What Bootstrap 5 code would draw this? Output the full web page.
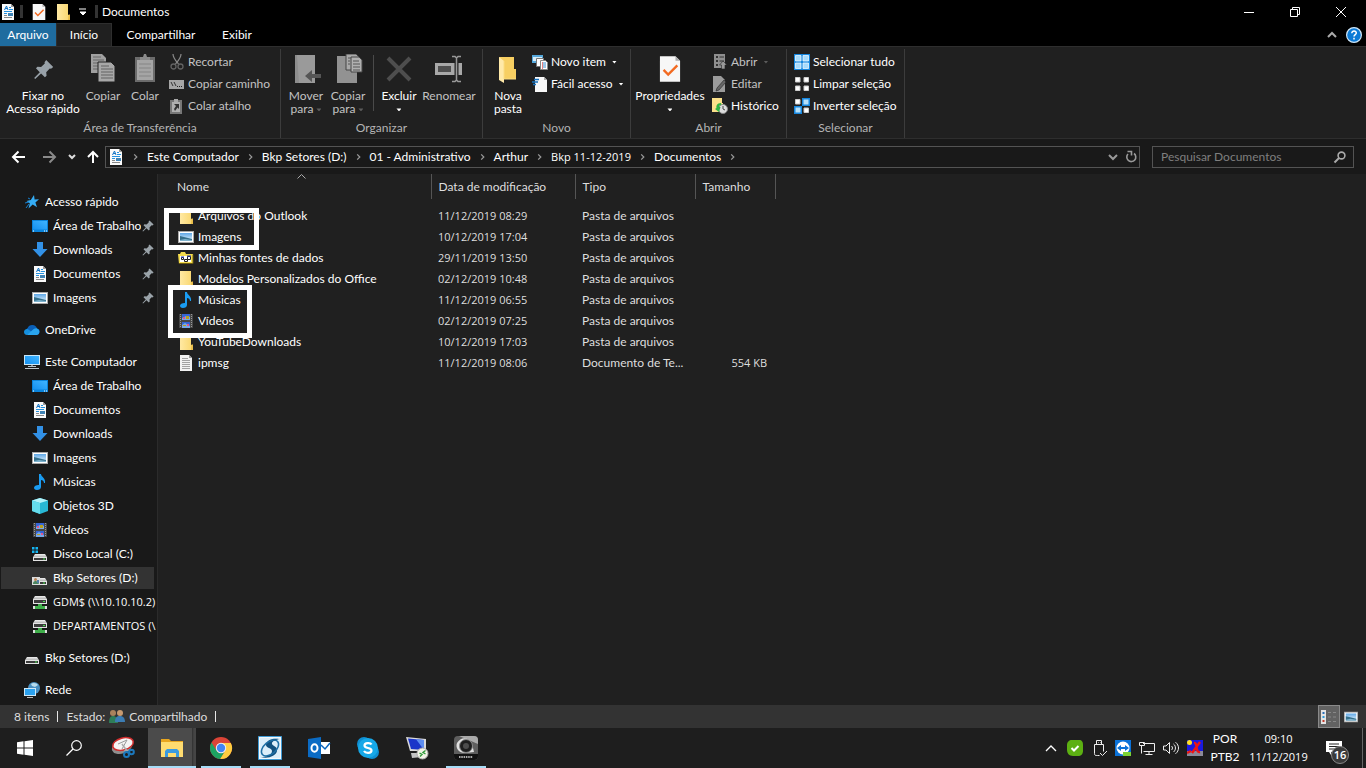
<!DOCTYPE html>
<html lang="pt-BR">
<head>
<meta charset="utf-8">
<meta name="viewport" content="width=device-width, initial-scale=1">
<title>Documentos</title>
<link href="https://cdn.jsdelivr.net/npm/bootstrap@5.3.0/dist/css/bootstrap.min.css" rel="stylesheet">
<style>
  body { font-family: Lato, "Open Sans", sans-serif; font-size: 12px; line-height: 16px; background: #202020; color: #fff; }
  button, input { font: inherit; color: inherit; }
  svg { flex: none; display: block; }
  .defs { position: absolute; width: 0; height: 0; }
  .i16 { width: 16px; height: 16px; }
  .i24 { width: 24px; height: 24px; }
  .i32 { width: 32px; height: 32px; }
  .plain { background: none; border: 0; padding: 0; border-radius: 0; color: inherit; text-decoration: none; font-size: 12px; line-height: 16px; white-space: nowrap; }
  .plain:hover { color: #fff; }
  .figures { font-family: "Open Sans", sans-serif; font-size: 11px; }

  .title-bar { background: #000; height: 23px; padding: 0 2px 0 0; }
  .v-tick { width: 3px; height: 13px; background: #333; }
  .title-name { margin-left: 4px; }
  .win-btn { width: 46px; height: 23px; }
  .tab-bar { background: #000; height: 23px; }
  .tab-link { height: 23px; display: flex; align-items: center; justify-content: center; }
  .tab-file { width: 56px; background: #1f6c9f; }
  .tab-home { width: 56px; background: #202020; border: 1px solid #2e2e2e; border-bottom: 0; }
  .tab-share { width: 98px; }
  .tab-view { width: 54px; }

  .ribbon { background: #202020; border-top: 1px solid #2e2e2e; border-bottom: 1px solid #2e2e2e; height: 93px; }
  .r-group { border-right: 1px solid #3c3c3c; margin-top: 2px; padding-top: 2px; height: 89px; }
  .g-clip { width: 281px; } .g-org { width: 202px; } .g-new { width: 148px; } .g-open { width: 156px; } .g-sel { width: 118px; }
  .r-label { color: #b4b4b4; text-align: center; height: 18px; line-height: 16px; }
  .big.plain { display: flex; flex-direction: column; align-items: center; gap: 4px; text-align: center; line-height: 13px; padding-top: 2px; }
  .w42 { width: 42px; } .w58 { width: 58px; } .w78 { width: 78px; }
  .small-btn { display: flex; align-items: center; gap: 3px; height: 22px; padding: 0 3px !important; }
  .off, .off:hover { color: #c3c3c3; }
  .caret { display: inline-block; width: 5px; height: 3px; background: currentColor; clip-path: polygon(0 0, 100% 0, 50% 100%); vertical-align: middle; margin-left: 3px; }
  .caret-off { color: #5c5c5c; }
  .r-rule { width: 1px; height: 56px; background: #4a4a4a; margin: 4px 4px 0; }

  .nav-row { background: #191919; height: 35px; padding: 0 12px 0 11px; }
  .address { border: 1px solid #535353; height: 22px; padding: 0 0 0 2px; }
  .chev { width: 7px; height: 8px; color: #9a9a9a; }
  .search-box { width: 202px; height: 22px; border: 1px solid #535353; padding: 0 5px 0 8px; }
  .search-box input { background: none; border: 0; outline: 0; padding: 0; min-width: 0; }
  .search-box input::placeholder { color: #7f7f7f; opacity: 1; }

  .side { width: 158px; background: #191919; border-right: 1px solid #2b2b2b; padding: 16px 1px 0; overflow: hidden; }
  .side-item { display: flex; align-items: center; height: 24px; gap: 5px; padding-left: 23px !important; overflow: hidden; }
  .side-item.kid { padding-left: 31px !important; }
  .side-item .side-name { overflow: hidden; flex: 1 1 0; min-width: 0; }
  .side-item.chosen { background: #333; height: 22px; margin: 1px 2px 1px 0; }
  .side-pin { width: 12px; height: 12px; margin: 0 2px 0 -4px; color: #9aa3a9; }

  .files { width: 617px; table-layout: fixed; border-collapse: collapse; color: #dedede; }
  .files th { font-weight: 400; height: 25px; padding: 0 0 0 7px; border-right: 1px solid #555; }
  .files th:first-child { padding-left: 19px; position: relative; }
  .files td { height: 21px; padding: 0 0 0 7px; white-space: nowrap; overflow: hidden; text-overflow: ellipsis; }
  .files td:first-child { padding-left: 20px; color: #fff; }
  .files tbody::before { content: ""; display: block; height: 6px; }
  .files .f-name { display: flex; align-items: center; gap: 4px; height: 21px; }
  .sort-mark { position: absolute; top: 0; left: 139px; width: 9px; height: 5px; }
  .marker { position: absolute; border: 5px solid #fff; pointer-events: none; }
  .marker-a { left: 6px; top: 34px; width: 95px; height: 42px; }
  .marker-b { left: 10px; top: 111px; width: 84px; height: 53px; }

  .status { background: #333; height: 23px; padding-left: 14px; color: #dedede; }
  .s-rule { width: 1px; height: 11px; background: #e6e6e6; }
  .view-btn { width: 22px; height: 23px; display: flex; align-items: center; justify-content: center; }
  .view-on { background: #626262; border: 1px solid #8a8a8a !important; }

  .taskbar { background: #1e1e1e; height: 40px; padding: 0 2px 0 1px; }
  .task-list { gap: 1px; }
  .task { width: 48px; height: 40px; display: flex; align-items: center; justify-content: center; position: relative; }
  .running::after { content: ""; position: absolute; left: 4px; right: 4px; bottom: 0; height: 2px; background: #a6dcf7; }
  .current { background: linear-gradient(90deg, #4b4b4b 44px, #303030 44px, #454545 46px); }
  .current::after { left: 0; right: 0; }
  .tray { width: 24px; height: 40px; display: flex; align-items: center; justify-content: center; }
  .tray-text { line-height: 18px; text-align: center; white-space: nowrap; }
  .lang { width: 36px; } .clock { width: 71px; }
  .notif { width: 48px; height: 40px; display: flex; align-items: center; justify-content: center; position: relative; }
  .notif-n { position: absolute; left: 17px; top: 18px; width: 18px; height: 18px; border-radius: 50%; background: #3a3a3a; border: 1px solid #888; line-height: 16px; font-weight: 600; text-align: center; }
  .desk { border-left: 1px solid #666; height: 40px; width: 2px; }
</style>
</head>
<body>
<svg class="defs" aria-hidden="true">
  <defs>
    <linearGradient id="gFold" x1="0" x2="1"><stop offset="0" stop-color="#ffe9a3"/><stop offset="1" stop-color="#f9d66c"/></linearGradient>
    <linearGradient id="gScr" x1="0" x2="1" y1="1" y2="0"><stop offset="0" stop-color="#1590f0"/><stop offset="1" stop-color="#3fb4ff"/></linearGradient>
    <linearGradient id="gSky" x1="0" x2="0" y1="0" y2="1"><stop offset="0" stop-color="#5fa8e8"/><stop offset="1" stop-color="#eaf6fb"/></linearGradient>
    <linearGradient id="gDrv" x1="0" x2="0" y1="0" y2="1"><stop offset="0" stop-color="#f0f0f0"/><stop offset="1" stop-color="#b5b5b5"/></linearGradient>
  </defs>
  <symbol id="doc" viewBox="0 0 16 16"><path d="M2 0h9l3 3v13H2z" fill="#fafafa"/><path d="M11 0v3h3z" fill="#9a9a9a"/><path d="M4.500 6 6.500 2l1.500 4M5.200 4.500h2.300" stroke="#1273c4" fill="none"/><path d="M9 3.500h2M9 5.500h4M4 7.500h8M4 9.500h3" stroke="#2491e0"/><path d="M8 9h5v3H8z" fill="#3f83b5"/><path d="M4 11.500h3M4 13.500h8" stroke="#888"/></symbol>
  <symbol id="check" viewBox="0 0 24 28"><path d="M1 0h17l5 5v23H1z" fill="#f7f7f7"/><path d="M18 0v5h5z" fill="#aaa"/><path d="m5 15 5 5 10-10" fill="none" stroke="#f26a21" stroke-width="2.600"/></symbol>
  <symbol id="folder" viewBox="0 0 16 16"><path d="M2 0h11v11h2v5H2z" fill="url(#gFold)"/><path d="M13.500 10.500h1.500V16h-2z" fill="#e9bd4a"/></symbol>
  <symbol id="bigfolder" viewBox="0 0 20 28"><path d="M1 1h15v12h2v10H6z" fill="#f7cf62"/><path d="m1 1 5 4v22l-5-3z" fill="#ffe9a8"/><path d="M6 5v18h12" fill="none" stroke="#fbdc80"/></symbol>
  <symbol id="pin" viewBox="0 0 16 16"><path d="M10 .500 15.500 6l-1.700 1.300-1-.200L10 10l.300 2.800L9 14l-3-3-4.600 4.400-.800-.800L5 10 2 7l1.200-1.300L6 6l2.900-2.800-.200-1z" fill="currentColor"/></symbol>
  <symbol id="chev" viewBox="0 0 8 8"><path d="m2.500 1 3 3-3 3" fill="none" stroke="currentColor" stroke-width="1.400"/></symbol>
  <symbol id="desktop" viewBox="0 0 16 16"><path d="M0 2h16v12H0z" fill="#0a84dc"/><path d="M1 3h14v8.500H1z" fill="url(#gScr)"/><path d="M1 13h1M12 13h1M14 13h1" stroke="#fff"/></symbol>
  <symbol id="down" viewBox="0 0 16 16"><path d="M5 0h6v7h4.500L8 15 .500 7H5z" fill="#3291e6"/></symbol>
  <symbol id="image" viewBox="0 0 16 16"><path d="M0 2h16v12H0z" fill="#a9a9a9"/><path d="M1 3h14v10H1z" fill="#fff"/><path d="M2 4h12v8H2z" fill="url(#gSky)"/><path d="m2 7 4 1 8 2v2H2z" fill="#35708c"/><path d="m2 11 5-1 7 1v1H2z" fill="#7fb4cf"/></symbol>
  <symbol id="star" viewBox="0 0 16 16"><path d="m10 1 .600 4.500 4.400-.300-3.600 3.200 1.600 4.800-4.300-2.600-4.200 3.900 1.300-5.300-3.300-2.200 4.300-.900z" fill="#35adf5"/><path d="m4 4 2 1M1 9l4-1M2 14l3-4" stroke="#1580d0"/></symbol>
  <symbol id="cloud" viewBox="0 0 16 16"><path d="M4 13a4 4 0 0 1-.400-7A5 5 0 0 1 13 6.500 3.300 3.300 0 0 1 12.800 13z" fill="#0a60b8"/><path d="M3 13c-1.500 0-3-1-3-3s2-3.200 4-2.800L8 10z" fill="#1590df"/><path d="M3 13 8 8.500c2-1.500 3-2.500 5-2A3.400 3.400 0 0 1 13 13z" fill="#2aa5ef"/></symbol>
  <symbol id="pc" viewBox="0 0 16 16"><path d="M0 1h16v10H0z" fill="#c9e6f7"/><path d="M1 2h14v8H1z" fill="url(#gScr)"/><path d="M7 11h2v2H7z" fill="#888"/><path d="M4 12.500h8M1 14.500h14" stroke="#b8c4cc"/></symbol>
  <symbol id="music" viewBox="0 0 16 16"><path d="M7 0h2c0 3 5 4 4 9h-1c0-2-1.500-3-3-3v7c0 2-1.800 3-4 3s-3-1-3-2.200C2 12 4.500 10.800 7 11z" fill="#1a9cf2"/></symbol>
  <symbol id="cube" viewBox="0 0 16 16"><path d="m8 0 8 2.500v10.500L8 16l-8-3V2.500z" fill="#28b7d4"/><path d="m8 0 8 2.500L8 5 0 2.500z" fill="#b4f2fa"/><path d="M0 2.500 8 5v11l-8-3z" fill="#65dcec"/></symbol>
  <symbol id="video" viewBox="0 0 16 16"><path d="M1 1h14v14H1z" fill="#474747"/><path d="M2.500 1v14M13.500 1v14" stroke="#999" stroke-dasharray="1 1"/><path d="M4 1h8v6H4zM4 9h8v6H4z" fill="#3565d6"/><path d="m4 5 4-2 4 1v3H4zM4 12l3-2 5 3v2H4z" fill="#77a7e8"/><path d="M5 4h2v2H5zM9 11h2v2H9z" fill="#e4568a"/><path d="M8 3h3v3H8zM5 12h3v1H5z" fill="#b7a01e"/></symbol>
  <symbol id="drive" viewBox="0 0 16 16"><path d="M3 7h10l2 3H1z" fill="url(#gDrv)"/><path d="M1 10h14v4H1z" fill="#e3e3e3"/><path d="M2 11h12v2H2z" fill="#3c3c3c"/><path d="M11 12h2" stroke="#49e24e"/></symbol>
  <symbol id="drivec" viewBox="0 0 16 16"><path d="M3 8h10l2 3H1z" fill="url(#gDrv)"/><path d="M1 11h14v4H1z" fill="#e3e3e3"/><path d="M2 12h12v2H2z" fill="#3c3c3c"/><path d="M11 13h2" stroke="#49e24e"/><path d="M0 1h2.500v2.500H0zM3.500 1H6v2.500H3.500zM0 4.500h2.500V7H0zM3.500 4.500H6V7H3.500z" fill="#15b5f2"/></symbol>
  <symbol id="drived" viewBox="0 0 16 16"><path d="M3 8h10l2 3H1z" fill="url(#gDrv)"/><path d="M1 11h14v4H1z" fill="#e3e3e3"/><path d="M2 12h12v2H2z" fill="#3c3c3c"/><path d="M11 13h2" stroke="#49e24e"/><path d="M0 7h8v8H0z" fill="#dcdcdc"/><path d="M1 14c0-3 2-3 2.500-3S6 11 7 14z" fill="#4c8660"/><circle cx="3.500" cy="9.500" r="1.500" fill="#b98357"/><path d="M5 10h2v3H5z" fill="#547ea8"/></symbol>
  <symbol id="netdrive" viewBox="0 0 16 16"><path d="M3 2h10l2 3H1z" fill="url(#gDrv)"/><path d="M1 5h14v5H1z" fill="#e3e3e3"/><path d="M2 6h12v3H2z" fill="#3c3c3c"/><path d="M11 7.500h2" stroke="#49e24e"/><path d="M6 10h4v2h5v3H1v-3h5z" fill="#3fae4a"/><path d="M1 12h2v3H1zM13 12h2v3h-2z" fill="#ddd"/></symbol>
  <symbol id="network" viewBox="0 0 16 16"><circle cx="10" cy="6" r="6" fill="#4a90c2"/><path d="M7 2c2-2 6-1 7 1l-3 2-3-1z" fill="#b9dcee"/><path d="M0 6h12v8H0z" fill="#cfe8f7"/><path d="M1 7h10v6H1z" fill="#2ba1ee"/><path d="M3 15.500h6" stroke="#bbb"/></symbol>
  <symbol id="dsn" viewBox="0 0 16 16"><path d="M0 4h2l1-2h4l1 2h7v10H1z" fill="#f5dd4e"/><path d="M1 13.500h14v-9" fill="none" stroke="#6d5c10"/><path d="M2 6h11v6H2z" fill="#fff"/><path d="M3.500 7.500h2v2h-2zM9.500 6.500h3v3h-3zM6.500 9.500h3v2h-3z" fill="#fff" stroke="#222"/><path d="M3 7h3M9 6h4" stroke="#2034c0"/></symbol>
  <symbol id="txt" viewBox="0 0 16 16"><path d="M2 0h9l3 3v13H2z" fill="#f2f2f2"/><path d="M11 0v3h3z" fill="#999"/><path d="M4 3.500h6M4 5.500h8M4 7.500h8M4 9.500h8M4 11.500h8M4 13.500h8" stroke="#a2a2a2"/></symbol>
  <symbol id="copy" viewBox="0 0 26 28"><path d="M1 0h11l4 4v15H1z" fill="#a0a0a0"/><path d="M3 3h8M3 6h11M3 9h11M3 12h11M3 15h11" stroke="#666"/><path d="M8 8h13l4 4v16H8z" fill="#a8a8a8" stroke="#222"/><path d="M11 12h8M11 15h12M11 18h12M11 21h12M11 24h12" stroke="#626262"/></symbol>
  <symbol id="paste" viewBox="0 0 20 28"><path d="M0 3h20v25H0z" fill="#6c6c6c"/><path d="M2 6h16v20H2z" fill="#a5a5a5"/><path d="M5 6V3h3l1-3h2l1 3h3v3z" fill="#8a8a8a"/><path d="M4 10h12M4 14h12M4 18h12M4 22h12" stroke="#858585"/></symbol>
  <symbol id="cut" viewBox="0 0 16 16"><path d="M4 0c0 4 3 7 5.500 10M12 0c0 4-3 7-5.500 10" fill="none" stroke="#8a8a8a" stroke-width="1.200"/><circle cx="4.500" cy="12.500" r="2.500" fill="none" stroke="#626262" stroke-width="1.300"/><circle cx="11.500" cy="12.500" r="2.500" fill="none" stroke="#626262" stroke-width="1.300"/></symbol>
  <symbol id="path" viewBox="0 0 16 16"><path d="M0 4h15v9H0z" fill="#a6a6a6"/><path d="m2 6 2 4M5 6l2 4" stroke="#333"/><path d="M8 10.500h1M10 10.500h1M12 10.500h1" stroke="#222"/></symbol>
  <symbol id="pastelink" viewBox="0 0 16 16"><path d="M1 2h12v14H1z" fill="#777"/><path d="M3 4h8v10H3z" fill="#b0b0b0"/><path d="M5 1h4v3H5z" fill="#aaa"/><path d="M5 6h5v5L8.500 9.500 6 13l-1-2 2-3z" fill="#333"/></symbol>
  <symbol id="move" viewBox="0 0 28 30"><path d="M1 1h20v28H1z" fill="#8d8d8d"/><path d="M3 1h18v28H5z" fill="#9a9a9a"/><path d="m11 22 7-6v4h9v4h-9v4z" fill="#555"/></symbol>
  <symbol id="copyto" viewBox="0 0 28 30"><path d="M1 2h20v27H1z" fill="#929292"/><path d="M10 0h10l3 3v13H10z" fill="#a9a9a9" stroke="#444"/><path d="M15 3h8l3 3v12H15z" fill="#b0b0b0" stroke="#444"/><path d="M17 7h6M17 10h7M17 13h7M17 16h7M12 4h3M12 7h2M12 10h2" stroke="#555"/></symbol>
  <symbol id="del" viewBox="0 0 28 28"><path d="m3 3 22 22M25 3 3 25" stroke="#4e4e4e" stroke-width="4"/></symbol>
  <symbol id="rename" viewBox="0 0 30 28"><path d="M1 8h27v12H1z" fill="#a8a8a8"/><path d="M4 11h13v6H4z" fill="#4f4f4f"/><path d="M22.500 2v24" stroke="#222" stroke-width="4"/><path d="M18 1.500h3l1.500 1.500L24 1.500h3M22.500 3v22M18 26.500h3l1.500-1.500 1.500 1.500h3" fill="none" stroke="#999" stroke-width="1.500"/></symbol>
  <symbol id="newitem" viewBox="0 0 16 16"><path d="M0 1h11v8H0z" fill="#55a8dc"/><path d="M1 3h9v4H1z" fill="#d8edf7"/><path d="M4.500 4.500h7v8h-7z" fill="#fff" stroke="#777"/><path d="M8.500 6.500h5l2 2v7h-7z" fill="#fff" stroke="#888"/><path d="M10 9h4M10 11h4M10 13h4" stroke="#3b8fd2"/><path d="M10.500 8v7" stroke="#e58383"/></symbol>
  <symbol id="easy" viewBox="0 0 16 16"><path d="M3 1h9l3 3v12H3z" fill="#f8f8f8"/><path d="M12 1v3h3z" fill="#aaa"/><path d="M2 3.500h5M0 6h6M1 8.500h3" stroke="#1570bd" stroke-width="1.300"/></symbol>
  <symbol id="open" viewBox="0 0 16 16"><path d="M2 0h11v14H2z" fill="#8f8f8f"/><path d="M4 2h2v2H4zM4 6h2v2H4zM4 10h2v2H4z" fill="#333"/><path d="M7.500 3H12M7.500 7H12" stroke="#333"/><path d="m11 7 4 4h-2v4H9.500v-4H7.500z" fill="#999" stroke="#222" stroke-width=".600"/></symbol>
  <symbol id="edit" viewBox="0 0 16 16"><path d="M1 0h8l4 4v12H1z" fill="#9b9b9b"/><path d="m5 12 7-8 2 2-7 8-3 1z" fill="#666" stroke="#222" stroke-width=".600"/></symbol>
  <symbol id="hist" viewBox="0 0 16 16"><path d="M0 0h10v5h1v9H0z" fill="#fbe08a"/><circle cx="11" cy="11" r="4.500" fill="#ddd" stroke="#888"/><path d="M11 8v3l2 1" fill="none" stroke="#444"/><path d="M9 5c-4 0-5 3-4.500 5L3 11l4 3 1.500-5H7c0-1.500 1-2 2.500-2.500z" fill="#2fb344"/></symbol>
  <symbol id="selall" viewBox="0 0 16 16"><path d="M0 0h16v16H0z" fill="#1687df"/><path d="M1.500 1.500h5.500v5.500H1.500zM9 1.500h5.500v5.500H9zM1.500 9h5.500v5.500H1.500zM9 9h5.500v5.500H9z" fill="#a8dbfb" stroke="#e8f6ff" stroke-width=".800"/></symbol>
  <symbol id="selnone" viewBox="0 0 16 16"><path d="M1.500 1.500H6V6H1.500zM10 1.500h4.500V6H10zM1.500 10H6v4.500H1.500zM10 10h4.500v4.500H10z" fill="#fff" stroke="#ccc"/></symbol>
  <symbol id="selinv" viewBox="0 0 16 16"><path d="M1.500 1.500H6V6H1.500zM10 10h4.500v4.500H10z" fill="#fff" stroke="#ccc"/><path d="M8 0h8v8H8zM0 8h8v8H0z" fill="#1687df"/><path d="M9.500 1.500h5v5h-5zM1.500 9.500h5v5h-5z" fill="#b5e0fb"/></symbol>
  <symbol id="lens" viewBox="0 0 16 16"><circle cx="9.500" cy="6.500" r="3.400" fill="none" stroke="currentColor" stroke-width="1.600"/><path d="M7 9l-4.500 4.500" stroke="currentColor" stroke-width="2"/></symbol>
  <symbol id="people" viewBox="0 0 16 16"><circle cx="4" cy="4" r="3" fill="#a9825c"/><path d="M0 14c0-6 2-7 4-7s5 1 5 7z" fill="#2e7d58"/><circle cx="11" cy="4" r="3" fill="#c79a70"/><path d="M6 13c0-5 2-6 5-6s5 2 5 6z" fill="#3c7db4"/></symbol>
</svg>

<div class="vh-100 d-flex flex-column overflow-hidden">
  <header>
    <div class="title-bar d-flex align-items-center">
      <svg class="i16"><use href="#doc"/></svg>
      <span class="v-tick ms-1"></span>
      <button class="btn plain ms-2" aria-label="Propriedades"><svg class="i16"><use href="#check"/></svg></button>
      <button class="btn plain ms-2" aria-label="Nova pasta"><svg class="i16"><use href="#folder"/></svg></button>
      <button class="btn plain ms-2" aria-label="Personalizar"><svg width="8" height="8"><path d="M0 1h7M1 4h6L4 7z" stroke="#fff" fill="#fff"/></svg></button>
      <span class="v-tick ms-2"></span>
      <span class="title-name">Documentos</span>
      <div class="ms-auto d-flex">
        <button class="btn plain win-btn" aria-label="Minimizar"><svg class="m-auto" width="10" height="10"><path d="M0 5.500h10" stroke="#fff"/></svg></button>
        <button class="btn plain win-btn" aria-label="Restaurar"><svg class="m-auto" width="10" height="10"><path d="M.500 2.500h7v7h-7zM2.500 2.500v-2h7v7h-2" stroke="#fff" fill="none"/></svg></button>
        <button class="btn plain win-btn" aria-label="Fechar"><svg class="m-auto" width="10" height="10"><path d="m0 0 10 10M10 0 0 10" stroke="#fff"/></svg></button>
      </div>
    </div>
    <nav class="tab-bar d-flex align-items-center">
      <a href="#" class="plain tab-link tab-file">Arquivo</a>
      <a href="#" class="plain tab-link tab-home">Início</a>
      <a href="#" class="plain tab-link tab-share">Compartilhar</a>
      <a href="#" class="plain tab-link tab-view">Exibir</a>
      <button class="btn plain ms-auto me-2" aria-label="Minimizar faixa"><svg width="12" height="8"><path d="m2 6 4-4 4 4" stroke="#aaa" stroke-width="2" fill="none"/></svg></button>
      <button class="btn plain me-1" aria-label="Ajuda"><svg class="i16" viewBox="0 0 16 16"><circle cx="8" cy="8" r="7.400" fill="#0b7ad6" stroke="#cfe6f8" stroke-width="1.200"/><path d="M5.800 6.200c0-3 4.600-2.700 4.500-.200C10.300 7.600 8 7.600 8 9.500M8 10.800v1.600" fill="none" stroke="#fff" stroke-width="1.500"/></svg></button>
    </nav>
    <div class="ribbon d-flex">
      <section class="r-group g-clip d-flex flex-column justify-content-between">
        <div class="d-flex ps-1">
          <button class="btn plain big w78"><svg class="i32" viewBox="-5 -5 25 25" color="#98a1a8"><use href="#pin" width="16" height="16"/></svg><span>Fixar no<br>Acesso rápido</span></button>
          <button class="btn plain big w42 off"><svg class="i32" viewBox="-3 -1 32 32"><use href="#copy" width="26" height="28"/></svg>Copiar</button>
          <button class="btn plain big w42 off"><svg class="i32" viewBox="-6 -1 32 32"><use href="#paste" width="20" height="28"/></svg>Colar</button>
          <div>
            <button class="btn plain small-btn off"><svg class="i16"><use href="#cut"/></svg>Recortar</button>
            <button class="btn plain small-btn off"><svg class="i16"><use href="#path"/></svg>Copiar caminho</button>
            <button class="btn plain small-btn off"><svg class="i16"><use href="#pastelink"/></svg>Colar atalho</button>
          </div>
        </div>
        <div class="r-label">Área de Transferência</div>
      </section>
      <section class="r-group g-org d-flex flex-column justify-content-between">
        <div class="d-flex ps-1">
          <button class="btn plain big w42 off"><svg class="i32" viewBox="-4 -1 32 32"><use href="#move" width="28" height="30"/></svg><span>Mover<br>para<i class="caret caret-off"></i></span></button>
          <button class="btn plain big w42 off"><svg class="i32" viewBox="-4 -1 32 32"><use href="#copyto" width="28" height="30"/></svg><span>Copiar<br>para<i class="caret caret-off"></i></span></button>
          <span class="r-rule"></span>
          <button class="btn plain big w42"><svg class="i32" viewBox="-2 -2 32 32"><use href="#del" width="28" height="28"/></svg><span>Excluir<br><i class="caret ms-0"></i></span></button>
          <button class="btn plain big w58 off"><svg class="i32" viewBox="-1 -2 32 32"><use href="#rename" width="30" height="28"/></svg>Renomear</button>
        </div>
        <div class="r-label">Organizar</div>
      </section>
      <section class="r-group g-new d-flex flex-column justify-content-between">
        <div class="d-flex ps-1">
          <button class="btn plain big w42"><svg class="i32" viewBox="-6 -3 32 32"><use href="#bigfolder" width="20" height="28"/></svg><span>Nova<br>pasta</span></button>
          <div>
            <button class="btn plain small-btn"><svg class="i16"><use href="#newitem"/></svg>Novo item<i class="caret"></i></button>
            <button class="btn plain small-btn"><svg class="i16"><use href="#easy"/></svg>Fácil acesso<i class="caret"></i></button>
          </div>
        </div>
        <div class="r-label">Novo</div>
      </section>
      <section class="r-group g-open d-flex flex-column justify-content-between">
        <div class="d-flex">
          <button class="btn plain big w78"><svg class="i32" viewBox="-5 -2 32 32"><use href="#check" width="22" height="28"/></svg><span>Propriedades<br><i class="caret ms-0"></i></span></button>
          <div>
            <button class="btn plain small-btn off"><svg class="i16"><use href="#open"/></svg>Abrir<i class="caret caret-off"></i></button>
            <button class="btn plain small-btn off"><svg class="i16"><use href="#edit"/></svg>Editar</button>
            <button class="btn plain small-btn"><svg class="i16"><use href="#hist"/></svg>Histórico</button>
          </div>
        </div>
        <div class="r-label">Abrir</div>
      </section>
      <section class="r-group g-sel d-flex flex-column justify-content-between">
        <div class="ps-1">
          <button class="btn plain small-btn"><svg class="i16"><use href="#selall"/></svg>Selecionar tudo</button>
          <button class="btn plain small-btn"><svg class="i16"><use href="#selnone"/></svg>Limpar seleção</button>
          <button class="btn plain small-btn"><svg class="i16"><use href="#selinv"/></svg>Inverter seleção</button>
        </div>
        <div class="r-label">Selecionar</div>
      </section>
    </div>
    <div class="nav-row d-flex align-items-center gap-1">
      <div class="d-flex align-items-center gap-1">
        <button class="btn plain me-2" aria-label="Voltar"><svg width="18" height="16"><path d="M2 8h12M7.500 2.500 2 8l5.500 5.500" stroke="#fff" stroke-width="2" fill="none"/></svg></button>
        <button class="btn plain me-1" aria-label="Avançar"><svg width="18" height="16"><path d="M2 8h12M8.500 2.500 14 8l-5.500 5.500" stroke="#8a8a8a" stroke-width="2" fill="none"/></svg></button>
        <button class="btn plain me-1" aria-label="Recentes"><svg width="10" height="8"><path d="m2 2 3 3 3-3" stroke="#ddd" stroke-width="2" fill="none"/></svg></button>
        <button class="btn plain" aria-label="Acima"><svg width="16" height="16"><path d="M8 14V3M3 8l5-5 5 5" stroke="#fff" stroke-width="2" fill="none"/></svg></button>
      </div>
      <div class="address d-flex align-items-center flex-grow-1">
        <svg class="i16"><use href="#doc"/></svg>
        <nav class="d-flex align-items-center gap-2 ms-2" aria-label="Caminho">
          <svg class="chev"><use href="#chev"/></svg><a href="#" class="plain">Este Computador</a>
          <svg class="chev"><use href="#chev"/></svg><a href="#" class="plain">Bkp Setores (D:)</a>
          <svg class="chev"><use href="#chev"/></svg><a href="#" class="plain">01 - Administrativo</a>
          <svg class="chev"><use href="#chev"/></svg><a href="#" class="plain">Arthur</a>
          <svg class="chev"><use href="#chev"/></svg><a href="#" class="plain figures">Bkp 11-12-2019</a>
          <svg class="chev"><use href="#chev"/></svg><a href="#" class="plain">Documentos</a>
          <svg class="chev"><use href="#chev"/></svg>
        </nav>
        <button class="btn plain ms-auto me-1" aria-label="Locais anteriores"><svg width="12" height="10"><path d="m2 3 4 4 4-4" stroke="#999" stroke-width="2" fill="none"/></svg></button>
        <button class="btn plain" aria-label="Atualizar"><svg class="i16" viewBox="0 0 16 16"><path d="M11 4.500A4.500 4.500 0 1 1 5 5M4.500 2.500h4v4" stroke="#999" stroke-width="1.600" fill="none"/></svg></button>
      </div>
      <div class="search-box d-flex align-items-center ms-2">
        <input type="text" class="flex-grow-1" placeholder="Pesquisar Documentos" aria-label="Pesquisar Documentos">
        <svg class="i16" color="#aaa"><use href="#lens"/></svg>
      </div>
    </div>
  </header>

  <main class="d-flex flex-grow-1 overflow-hidden">
    <nav class="side flex-shrink-0" aria-label="Painel de navegação">
      <div class="mb-2">
        <a href="#" class="plain side-item"><svg class="i16"><use href="#star"/></svg><span class="side-name">Acesso rápido</span></a>
        <a href="#" class="plain side-item kid"><svg class="i16"><use href="#desktop"/></svg><span class="side-name">Área de Trabalho</span><svg class="side-pin"><use href="#pin"/></svg></a>
        <a href="#" class="plain side-item kid"><svg class="i16"><use href="#down"/></svg><span class="side-name">Downloads</span><svg class="side-pin"><use href="#pin"/></svg></a>
        <a href="#" class="plain side-item kid"><svg class="i16"><use href="#doc"/></svg><span class="side-name">Documentos</span><svg class="side-pin"><use href="#pin"/></svg></a>
        <a href="#" class="plain side-item kid"><svg class="i16"><use href="#image"/></svg><span class="side-name">Imagens</span><svg class="side-pin"><use href="#pin"/></svg></a>
      </div>
      <div class="mb-2">
        <a href="#" class="plain side-item"><svg class="i16"><use href="#cloud"/></svg><span class="side-name">OneDrive</span></a>
      </div>
      <div class="mb-2">
        <a href="#" class="plain side-item"><svg class="i16"><use href="#pc"/></svg><span class="side-name">Este Computador</span></a>
        <a href="#" class="plain side-item kid"><svg class="i16"><use href="#desktop"/></svg><span class="side-name">Área de Trabalho</span></a>
        <a href="#" class="plain side-item kid"><svg class="i16"><use href="#doc"/></svg><span class="side-name">Documentos</span></a>
        <a href="#" class="plain side-item kid"><svg class="i16"><use href="#down"/></svg><span class="side-name">Downloads</span></a>
        <a href="#" class="plain side-item kid"><svg class="i16"><use href="#image"/></svg><span class="side-name">Imagens</span></a>
        <a href="#" class="plain side-item kid"><svg class="i16"><use href="#music"/></svg><span class="side-name">Músicas</span></a>
        <a href="#" class="plain side-item kid"><svg class="i16"><use href="#cube"/></svg><span class="side-name">Objetos 3D</span></a>
        <a href="#" class="plain side-item kid"><svg class="i16"><use href="#video"/></svg><span class="side-name">Vídeos</span></a>
        <a href="#" class="plain side-item kid"><svg class="i16"><use href="#drivec"/></svg><span class="side-name">Disco Local (C:)</span></a>
        <a href="#" class="plain side-item kid chosen"><svg class="i16"><use href="#drived"/></svg><span class="side-name">Bkp Setores (D:)</span></a>
        <a href="#" class="plain side-item kid"><svg class="i16"><use href="#netdrive"/></svg><span class="side-name figures">GDM$ (\\10.10.10.2)</span></a>
        <a href="#" class="plain side-item kid"><svg class="i16"><use href="#netdrive"/></svg><span class="side-name figures">DEPARTAMENTOS (\</span></a>
      </div>
      <div class="mb-2">
        <a href="#" class="plain side-item"><svg class="i16"><use href="#drive"/></svg><span class="side-name">Bkp Setores (D:)</span></a>
      </div>
      <a href="#" class="plain side-item"><svg class="i16"><use href="#network"/></svg><span class="side-name">Rede</span></a>
    </nav>
    <div class="flex-grow-1 position-relative overflow-hidden">
      <table class="files">
        <colgroup><col style="width:273px"><col style="width:144px"><col style="width:120px"><col style="width:80px"></colgroup>
        <thead><tr><th>Nome<svg class="sort-mark"><path d="m.500 4.500 4-4 4 4" fill="none" stroke="#aaa"/></svg></th><th>Data de modificação</th><th>Tipo</th><th>Tamanho</th></tr></thead>
        <tbody>
          <tr><td><span class="f-name"><svg class="i16"><use href="#folder"/></svg>Arquivos do Outlook</span></td><td class="figures">11/12/2019 08:29</td><td>Pasta de arquivos</td><td></td></tr>
          <tr><td><span class="f-name"><svg class="i16"><use href="#image"/></svg>Imagens</span></td><td class="figures">10/12/2019 17:04</td><td>Pasta de arquivos</td><td></td></tr>
          <tr><td><span class="f-name"><svg class="i16"><use href="#dsn"/></svg>Minhas fontes de dados</span></td><td class="figures">29/11/2019 13:50</td><td>Pasta de arquivos</td><td></td></tr>
          <tr><td><span class="f-name"><svg class="i16"><use href="#folder"/></svg>Modelos Personalizados do Office</span></td><td class="figures">02/12/2019 10:48</td><td>Pasta de arquivos</td><td></td></tr>
          <tr><td><span class="f-name"><svg class="i16"><use href="#music"/></svg>Músicas</span></td><td class="figures">11/12/2019 06:55</td><td>Pasta de arquivos</td><td></td></tr>
          <tr><td><span class="f-name"><svg class="i16"><use href="#video"/></svg>Vídeos</span></td><td class="figures">02/12/2019 07:25</td><td>Pasta de arquivos</td><td></td></tr>
          <tr><td><span class="f-name"><svg class="i16"><use href="#folder"/></svg>YouTubeDownloads</span></td><td class="figures">10/12/2019 17:03</td><td>Pasta de arquivos</td><td></td></tr>
          <tr><td><span class="f-name"><svg class="i16"><use href="#txt"/></svg>ipmsg</span></td><td class="figures">11/12/2019 08:06</td><td>Documento de Te...</td><td class="text-end pe-2 figures">554 KB</td></tr>
        </tbody>
      </table>
      <span class="marker marker-a"></span>
      <span class="marker marker-b"></span>
    </div>
  </main>

  <div class="status d-flex align-items-center">
    <span>8 itens</span><span class="s-rule mx-2"></span>
    <span>Estado:</span><svg class="i16 mx-1"><use href="#people"/></svg><span>Compartilhado</span><span class="s-rule ms-2"></span>
    <div class="ms-auto d-flex me-1">
      <button class="btn plain view-btn view-on" aria-label="Detalhes"><svg width="16" height="14"><path d="M0 0h5v14H0z" fill="#e4e4e4"/><path d="M7 2.500h3M12 2.500h3M7 7h3M12 7h3M7 11.500h3M12 11.500h3" stroke="#888"/><path d="M1.500 2h2v2h-2z" fill="#2a70b8"/><path d="M1.500 6h2v2h-2z" fill="#2a9ad8"/><path d="M1.500 10h2v2h-2z" fill="#c23a2a"/></svg></button>
      <button class="btn plain view-btn" aria-label="Ícones grandes"><svg width="14" height="14"><use href="#image"/></svg></button>
    </div>
  </div>

  <footer class="taskbar d-flex">
    <div class="d-flex task-list">
      <button class="btn plain task" aria-label="Iniciar"><svg class="i16" viewBox="0 0 16 16"><path d="m0 2.200 6.500-.900v6.200H0zM7.500 1.200 16 0v7.500H7.500zM0 8.500h6.500v6.200L0 13.800zM7.500 8.500H16V16l-8.500-1.200z" fill="#fff"/></svg></button>
      <button class="btn plain task" aria-label="Pesquisar"><svg class="i16" viewBox="0 0 16 16"><circle cx="10.500" cy="5.500" r="4.800" fill="none" stroke="#fff" stroke-width="1.200"/><path d="M7 9 .500 15.500" stroke="#fff" stroke-width="1.300"/></svg></button>
      <button class="btn plain task" aria-label="Ferramenta de Captura"><svg class="i24" viewBox="0 0 24 24"><ellipse cx="11" cy="11" rx="10.500" ry="6.500" transform="rotate(-20 11 11)" fill="#8e8e8e"/><ellipse cx="12" cy="8" rx="10.500" ry="6" transform="rotate(-15 12 8)" fill="#f4f4f4" stroke="#d22d2d" stroke-width="1.500"/><path d="m7 8 9-4-5 9" fill="none" stroke="#999"/><path d="m11 8 5 7M13 15l8-1" stroke="#aaa" stroke-width="1.500"/><circle cx="15.500" cy="18.500" r="2.500" fill="none" stroke="#1b78bd" stroke-width="2"/><circle cx="20.500" cy="16" r="2.300" fill="none" stroke="#1b78bd" stroke-width="2"/></svg></button>
      <button class="btn plain task running current" aria-label="Explorador de Arquivos"><svg class="i24" viewBox="0 0 24 24"><path d="M1 3h8l2 2h12v15H1z" fill="#e9a61f"/><path d="M1 6h22v15H1z" fill="#ffdc70"/><path d="M5 21v-6l2-2h10l2 2v6h-3v-4H8v4z" fill="#3b9be0"/></svg></button>
      <button class="btn plain task running" aria-label="Chrome"><svg class="i24" viewBox="0 0 24 24"><circle cx="12" cy="12" r="11" fill="#db4437"/><path d="M12 7h9.800A11 11 0 0 1 11 23l6-10z" fill="#ffcd40"/><path d="m2.500 6.500 5 8a5 5 0 0 0 8.800 0L11 23A11 11 0 0 1 2.500 6.500z" fill="#1da462"/><circle cx="12" cy="12" r="5.200" fill="#f1f1f1"/><circle cx="12" cy="12" r="4.200" fill="#4285f4"/></svg></button>
      <button class="btn plain task running" aria-label="Sistema"><svg class="i24" viewBox="0 0 24 24"><path d="M.500.500h23v23H.500z" fill="#f4f9fc" stroke="#3f9bd6"/><path d="M2 2h20v20H2z" fill="#dceefa"/><path d="M21 3C13 2 8 5 8 9c0 3 6 3 6 6 0 4-6 6-11 6 7 2 15-1 16-6 1-5-6-5-5-8 .500-2 4-3 7-4z" fill="#12517f"/><ellipse cx="12" cy="12" rx="10" ry="6" transform="rotate(-40 12 12)" fill="none" stroke="#1f6fa5" stroke-width="1.500"/></svg></button>
      <button class="btn plain task" aria-label="Outlook"><svg class="i24" viewBox="0 0 24 24"><path d="M12 6h11v12H12z" fill="#fff"/><path d="m14 9 4 4 5-6" fill="none" stroke="#0a66bd" stroke-width="1.500"/><path d="m1 3 13-2v22L1 21z" fill="#0b6bc4"/><ellipse cx="7.500" cy="12" rx="3" ry="3.800" fill="none" stroke="#fff" stroke-width="2"/></svg></button>
      <button class="btn plain task" aria-label="Skype"><svg class="i24" viewBox="0 0 24 24"><circle cx="8" cy="8" r="7" fill="#0f8fd3"/><circle cx="16" cy="16" r="7" fill="#0f8fd3"/><circle cx="12" cy="12" r="10" fill="#16a8e8"/><path d="M15.500 8.500c-1-2-7-2-7 1 0 3.500 7 1.500 7 5 0 3-6 3-7.500.500" fill="none" stroke="#fff" stroke-width="2.200"/></svg></button>
      <button class="btn plain task" aria-label="Área de trabalho remota"><svg class="i24" viewBox="0 0 24 24"><path d="m1 1 20 2v12L5 15z" fill="#dadada"/><path d="m3 2.500 16 1.500v10L6 13z" fill="#1b35c9"/><path d="m11 3.200 8 .800v10z" fill="#5d8df0"/><path d="M6 17h10l1 4-10 1z" fill="#c4c4c4"/><circle cx="17.500" cy="17.500" r="5.500" fill="#f3f3e8" stroke="#aaa"/><path d="m14.500 17 2.500 1.500-2 2M20.500 14.500 18 16.500l2.500 1.500" fill="none" stroke="#2f9a3a" stroke-width="1.400"/></svg></button>
      <button class="btn plain task running" aria-label="Câmera"><svg class="i24" viewBox="0 0 24 24"><rect width="24" height="24" rx="4" fill="#5e5e5e"/><path d="m5 0 19 8V4a4 4 0 0 0-4-4z" fill="#aaa"/><path d="M3 7C7 0 15 1 18 8l2 8-9 1C5 17 1 12 3 7z" fill="#e0e0e0"/><circle cx="12" cy="10" r="6.500" fill="#1d1d1d" stroke="#888"/><circle cx="12" cy="10" r="3" fill="#4c4c4c"/><path d="M0 18h24v2a4 4 0 0 1-4 4H4a4 4 0 0 1-4-4z" fill="#111"/><path d="M5 21h14" stroke="#ddd" stroke-width="1.500" stroke-dasharray="1.500 .800"/></svg></button>
    </div>
    <div class="ms-auto d-flex align-items-center">
      <button class="btn plain tray" aria-label="Mostrar ícones ocultos"><svg width="12" height="8"><path d="m1 7 5-5 5 5" fill="none" stroke="#fff" stroke-width="1.300"/></svg></button>
      <button class="btn plain tray" aria-label="Antivírus"><svg class="i16" viewBox="0 0 16 16"><path d="M5 0h7c3 0 4 2 4 5v6c0 3-2 5-5 5H6c-4 0-6-3-6-6V5c0-3 2-5 5-5z" fill="#5cb012"/><path d="m4.500 8 2.500 2.500L11.500 6" fill="none" stroke="#fff" stroke-width="2"/></svg></button>
      <button class="btn plain tray" aria-label="USB"><svg class="i16" viewBox="0 0 16 16"><path d="M5.500.500h5v4h-5zM3.500 4.500h9v7M3.500 4.500v9c0 2 1 2 3 2h2M7 2.500h.500M9 2.500h.500M9 13l2.500 2.500L16 11" fill="none" stroke="#eee"/></svg></button>
      <button class="btn plain tray" aria-label="TeamViewer"><svg class="i16" viewBox="0 0 16 16"><path d="M0 0h16v16H0z" fill="#0b72d8"/><circle cx="8" cy="8" r="6.500" fill="#fff"/><path d="m2 8 4-3v2h4V5l4 3-4 3V9H6v2z" fill="#0b72d8"/><path d="M8 12h8v4H8z" fill="#7bd235"/></svg></button>
      <button class="btn plain tray" aria-label="Rede"><svg class="i16" viewBox="0 0 16 16"><path d="M4 3.500h11.500v8H4.500M10 11.500v3M6.500 14.500h7M.500 2.500h5v3h-5zM2.500 5.500v8" fill="none" stroke="#eee"/></svg></button>
      <button class="btn plain tray" aria-label="Volume"><svg class="i16" viewBox="0 0 16 16"><path d="M.500 6h2.500l3.500-3.500v11L3 10H.500zM8.500 6c1.300 1 1.300 3 0 4M10.500 4c2.600 2 2.600 6 0 8M12.500 2.200c4 3.300 4 8.300 0 11.600" fill="none" stroke="#eee"/></svg></button>
      <button class="btn plain tray" aria-label="Aplicativo"><svg class="i16" viewBox="0 0 16 16"><path d="M0 0h16v16H0z" fill="#1a1ae0"/><path d="M0 11h16v5H0z" fill="#8a8a9a"/><circle cx="2.500" cy="2.500" r="2.500" fill="#ffe11f"/><path d="M7 3c4-1 1 10 6 9M13 2 5 13M0 13l4-2" fill="none" stroke="#ee1414" stroke-width="2.400"/></svg></button>
      <div class="tray-text lang">POR<br>PTB2</div>
      <div class="tray-text clock figures">09:10<br>11/12/2019</div>
      <button class="btn plain notif" aria-label="Notificações"><svg width="16" height="16" class="me-2"><path d="M0 1h16v11H5v3l-2-3H0z" fill="#fff"/><path d="M3 4h10M3 6.500h10M3 9h7" stroke="#222"/></svg><span class="notif-n figures">16</span></button>
      <span class="desk"></span>
    </div>
  </footer>
</div>
<script src="https://cdn.jsdelivr.net/npm/bootstrap@5.3.0/dist/js/bootstrap.bundle.min.js"></script>
</body>
</html>
